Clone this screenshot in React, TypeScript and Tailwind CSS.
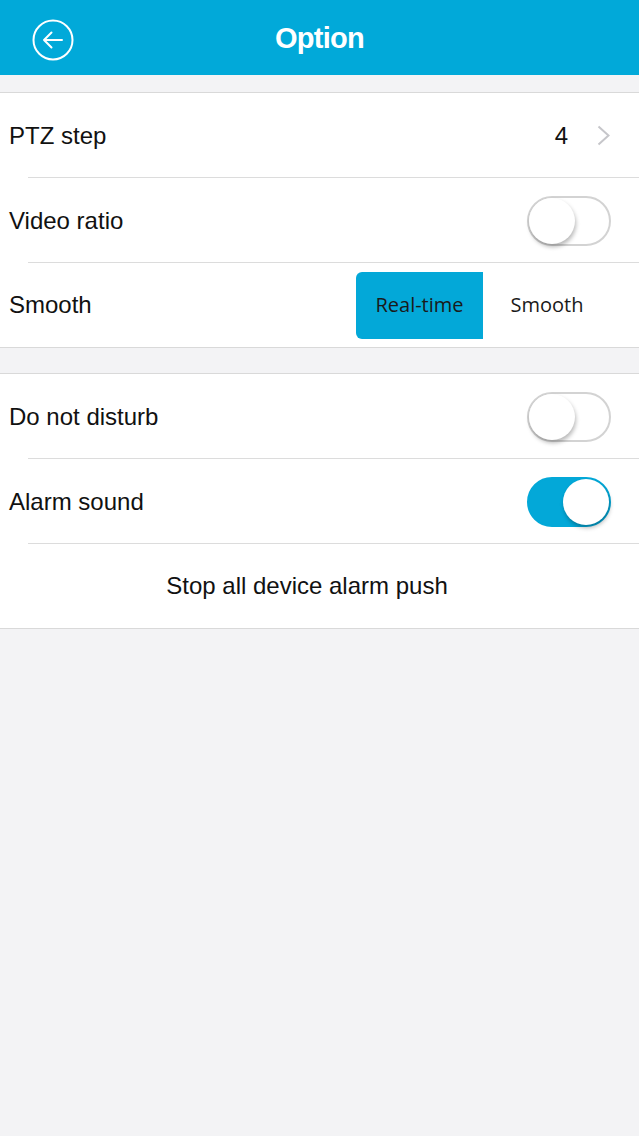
import React, { useState } from "react";

const Toggle = ({ on, onChange }: { on: boolean; onChange: () => void }) => (
  <button
    onClick={onChange}
    className={`relative w-[84px] h-[50px] rounded-full border-2 transition-colors ${
      on ? "bg-[#03a8d8] border-[#03a8d8]" : "bg-white border-[#d3d3d3]"
    }`}
  >
    <span
      className={`absolute top-0 w-[46px] h-[46px] rounded-full bg-white shadow-[1px_3px_4px_rgba(0,0,0,0.28)] ${
        on ? "left-[34px]" : "left-0"
      }`}
    />
  </button>
);

const Row = ({ children, last }: { children: React.ReactNode; last?: boolean }) => (
  <div className={`relative flex items-center pl-[9px] pr-[28px] ${last ? "h-[84px]" : "h-[85px]"}`}>
    {children}
    {!last && <div className="absolute bottom-0 left-[28px] right-0 h-px bg-[#dcdcdc]" />}
  </div>
);

const App = () => {
  const [videoRatio, setVideoRatio] = useState(false);
  const [mode, setMode] = useState<"real" | "smooth">("real");
  const [dnd, setDnd] = useState(false);
  const [alarm, setAlarm] = useState(true);

  return (
    <div
      className="min-h-[1136px] bg-[#f3f3f5] text-[#111]"
      style={{ fontFamily: '"Liberation Sans", Arial, sans-serif' }}
    >
      <header className="relative h-[75px] bg-[#01a9d9] flex items-center justify-center">
        <button className="absolute left-[32px] top-[19px] w-[42px] h-[42px]">
          <svg viewBox="0 0 42 42" className="w-full h-full" fill="none" stroke="white" strokeWidth="2">
            <circle cx="21" cy="21" r="19.5" />
            <path d="M30 21H12M19.5 13.5L12 21l7.5 7.5" strokeLinecap="round" strokeLinejoin="round" />
          </svg>
        </button>
        <h1 className="text-white text-[29px] font-bold tracking-tight pt-[2px]">Option</h1>
      </header>

      <section className="mt-[17px] bg-white border-y border-[#d9d9d9]">
        <Row>
          <span className="text-[24px] flex-1">PTZ step</span>
          <span className="text-[24px] mr-[29px]">4</span>
          <svg width="13" height="21" viewBox="0 0 13 21" fill="none" stroke="#c6c6ca" strokeWidth="2" className="mr-[1px]">
            <path d="M1.5 1.5l10 9-10 9" />
          </svg>
        </Row>
        <Row>
          <span className="text-[24px] flex-1">Video ratio</span>
          <Toggle on={videoRatio} onChange={() => setVideoRatio(!videoRatio)} />
        </Row>
        <Row last>
          <span className="text-[24px] flex-1">Smooth</span>
          <div className="flex h-[67px] text-[20px] text-[#1a1a1a]" style={{ fontFamily: '"Open Sans", Arial, sans-serif' }}>
            <button
              onClick={() => setMode("real")}
              className={`w-[127px] rounded-l-[6px] ${mode === "real" ? "bg-[#03a8d8]" : "bg-white"}`}
            >
              Real-time
            </button>
            <button
              onClick={() => setMode("smooth")}
              className={`w-[128px] ${mode === "smooth" ? "bg-[#03a8d8]" : "bg-white"}`}
            >
              Smooth
            </button>
          </div>
        </Row>
      </section>

      <section className="mt-[25px] bg-white border-y border-[#d9d9d9]">
        <Row>
          <span className="text-[24px] flex-1">Do not disturb</span>
          <Toggle on={dnd} onChange={() => setDnd(!dnd)} />
        </Row>
        <Row>
          <span className="text-[24px] flex-1">Alarm sound</span>
          <Toggle on={alarm} onChange={() => setAlarm(!alarm)} />
        </Row>
        <Row last>
          <button className="flex-1 text-[24px] text-center pr-[6px]">Stop all device alarm push</button>
        </Row>
      </section>
    </div>
  );
};

export default App;
